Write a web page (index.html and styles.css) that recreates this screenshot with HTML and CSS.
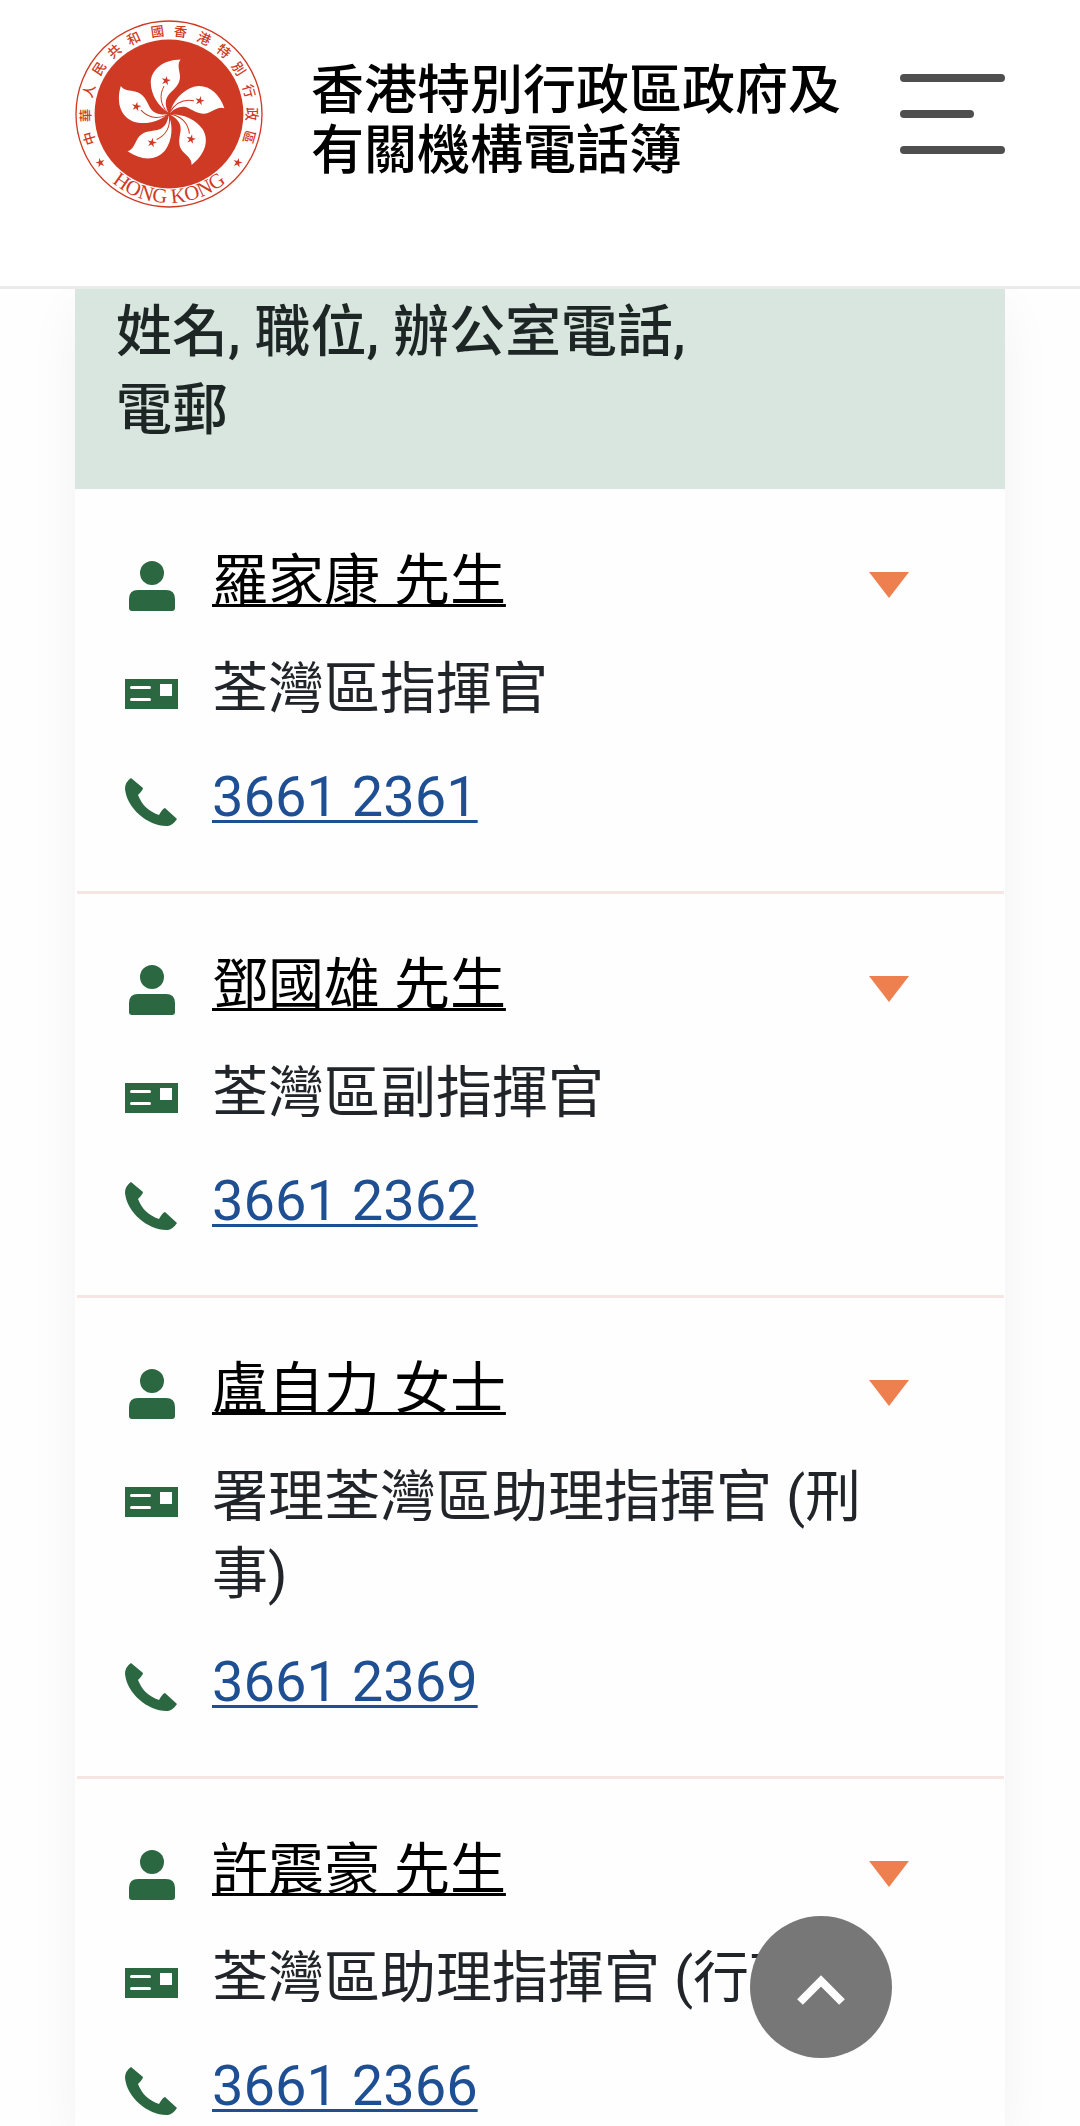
FILE: index.html
```html
<!DOCTYPE html>
<html lang="zh-Hant-HK">
<head>
  <meta charset="UTF-8">
  <title>香港特別行政區政府及有關機構電話簿</title>
  <meta name="viewport" content="width=device-width, initial-scale=1">
  <link rel="stylesheet" href="styles.css">
</head>
<body>
  <!-- shared icons -->
  <svg class="sprite" aria-hidden="true">
    <symbol id="icon-person" viewBox="0 0 54 54">
      <circle cx="27" cy="14" r="12"/>
      <path d="M4 40 Q4 31 13 31 H41 Q50 31 50 40 V49 Q50 52 47 52 H7 Q4 52 4 49 Z"/>
    </symbol>
    <symbol id="icon-card" viewBox="0 0 54 54">
      <path d="M0 12 H53 V42 H0 Z"/>
      <path d="M35 17 H47 V29 H35 Z" fill="#fff"/>
      <path d="M6.500 20.500 H24.500 M6.500 32.500 H24.500" stroke="#fff" stroke-width="3" stroke-linecap="round"/>
    </symbol>
    <symbol id="icon-phone" viewBox="0 0 54 54">
      <path d="M6 3 L18 13 Q18 15 13 20 C17 30 23 36 34 40 Q38 33 40 33 L52 44 Q48 50 43 51 C24 52 2 34 0 14 Q0 7 6 3 Z"/>
    </symbol>
    <symbol id="icon-caret" viewBox="0 0 40 26">
      <path d="M0 0 H40 L20 26 Z"/>
    </symbol>
  </svg>

  <header class="site-header">
    <a href="#" class="logo" aria-label="主頁">
      <svg viewBox="-283 -283 566 566" fill="#cf3a24">
        <defs>
          <path id="arc" d="M-268 0 A268 268 0 0 0 268 0"/>
          <polygon id="star" points="0,-14 3,-4 14,-4 5,2 9,13 0,6 -9,13 -5,2 -14,-4 -3,-4"/>
          <g id="petal">
            <path fill="#fff" d="M-2 -4 C-32 -22 -55 -58 -55 -96 C-52 -138 -14 -163 35 -164 C24 -150 31 -134 33 -116 C35 -90 16 -76 2 -62 C-14 -45 -12 -25 -2 -4 Z"/>
            <path fill="none" stroke="#cf3a24" stroke-width="3" d="M-15 -84 C-30 -56 -26 -28 -4 -4"/>
            <use href="#star" transform="translate(-9 -101) rotate(12)"/>
          </g>
        </defs>
        <circle r="280" fill="#fff" stroke="#cf3a24" stroke-width="4"/>
        <circle r="224"/>
        <use href="#petal"/>
        <use href="#petal" transform="rotate(72)"/>
        <use href="#petal" transform="rotate(144)"/>
        <use href="#petal" transform="rotate(216)"/>
        <use href="#petal" transform="rotate(288)"/>
        <use href="#star" transform="translate(-207 146) rotate(-15)"/>
        <use href="#star" transform="translate(207 146) rotate(15)"/>
        <g class="logo-ring">
          <text y="-236" transform="rotate(-107)">中</text>
          <text y="-236" transform="rotate(-91)">華</text>
          <text y="-236" transform="rotate(-74)">人</text>
          <text y="-236" transform="rotate(-57)">民</text>
          <text y="-236" transform="rotate(-41)">共</text>
          <text y="-236" transform="rotate(-25)">和</text>
          <text y="-236" transform="rotate(-8)">國</text>
          <text y="-236" transform="rotate(8)">香</text>
          <text y="-236" transform="rotate(25)">港</text>
          <text y="-236" transform="rotate(41)">特</text>
          <text y="-236" transform="rotate(57)">別</text>
          <text y="-236" transform="rotate(74)">行</text>
          <text y="-236" transform="rotate(90)">政</text>
          <text y="-236" transform="rotate(106)">區</text>
        </g>
        <text class="logo-name"><textPath href="#arc" startOffset="50%">HONG KONG</textPath></text>
      </svg>
    </a>
    <h1>香港特別行政區政府及有關機構電話簿</h1>
    <button class="menu-btn" aria-label="選單">
      <span></span>
      <span class="short"></span>
      <span></span>
    </button>
  </header>

  <main class="directory">
    <h2>姓名, 職位, 辦公室電話, 電郵</h2>
    <ul class="people">
      <li class="person">
        <div class="row">
          <svg class="icon"><use href="#icon-person"/></svg>
          <a href="#" class="name">羅家康 先生</a>
          <button class="toggle" aria-label="展開"><svg><use href="#icon-caret"/></svg></button>
        </div>
        <div class="row">
          <svg class="icon"><use href="#icon-card"/></svg>
          <span>荃灣區指揮官</span>
        </div>
        <div class="row">
          <svg class="icon"><use href="#icon-phone"/></svg>
          <a href="tel:36612361" class="tel">3661 2361</a>
        </div>
      </li>
      <li class="person">
        <div class="row">
          <svg class="icon"><use href="#icon-person"/></svg>
          <a href="#" class="name">鄧國雄 先生</a>
          <button class="toggle" aria-label="展開"><svg><use href="#icon-caret"/></svg></button>
        </div>
        <div class="row">
          <svg class="icon"><use href="#icon-card"/></svg>
          <span>荃灣區副指揮官</span>
        </div>
        <div class="row">
          <svg class="icon"><use href="#icon-phone"/></svg>
          <a href="tel:36612362" class="tel">3661 2362</a>
        </div>
      </li>
      <li class="person">
        <div class="row">
          <svg class="icon"><use href="#icon-person"/></svg>
          <a href="#" class="name">盧自力 女士</a>
          <button class="toggle" aria-label="展開"><svg><use href="#icon-caret"/></svg></button>
        </div>
        <div class="row">
          <svg class="icon"><use href="#icon-card"/></svg>
          <span>署理荃灣區助理指揮官 (刑事)</span>
        </div>
        <div class="row">
          <svg class="icon"><use href="#icon-phone"/></svg>
          <a href="tel:36612369" class="tel">3661 2369</a>
        </div>
      </li>
      <li class="person">
        <div class="row">
          <svg class="icon"><use href="#icon-person"/></svg>
          <a href="#" class="name">許震豪 先生</a>
          <button class="toggle" aria-label="展開"><svg><use href="#icon-caret"/></svg></button>
        </div>
        <div class="row">
          <svg class="icon"><use href="#icon-card"/></svg>
          <span>荃灣區助理指揮官 (行政)</span>
        </div>
        <div class="row">
          <svg class="icon"><use href="#icon-phone"/></svg>
          <a href="tel:36612366" class="tel">3661 2366</a>
        </div>
      </li>
    </ul>
  </main>

  <button class="back-top" aria-label="返回頁首">
    <svg viewBox="0 0 50 32"><path d="M4 28 L25 7 L46 28" fill="none" stroke="#fff" stroke-width="8"/></svg>
  </button>
</body>
</html>
```

FILE: styles.css
```css
* {
  box-sizing: border-box;
}
body {
  margin: 0;
  min-height: 100vh;
  display: flex;
  flex-direction: column;
  background: #fefefe;
  color: #212529;
  font-family: Roboto, "Noto Sans CJK TC", sans-serif;
  font-size: 56px;
  line-height: 77px;
}
button {
  padding: 0;
  border: none;
  background: none;
  cursor: pointer;
}
.sprite {
  display: none;
}

/* top bar */
.site-header {
  position: sticky;
  top: 0;
  z-index: 2;
  display: flex;
  align-items: flex-start;
  padding: 20px 75px 78px;
  background: #fff;
  border-bottom: 3px solid #e9ebea;
}
.logo {
  flex: none;
  width: 188px;
  height: 188px;
}
.logo svg {
  display: block;
  width: 100%;
  height: 100%;
}
.logo-ring {
  font-family: "Noto Sans CJK TC", sans-serif;
  font-size: 40px;
  font-weight: 500;
  text-anchor: middle;
}
.logo-name {
  font-family: "Liberation Serif", serif;
  font-size: 62px;
  text-anchor: middle;
}
.site-header h1 {
  flex: 1;
  margin: 41px 40px 0 48px;
  color: #000;
  font-size: 53px;
  font-weight: 500;
  line-height: 60px;
}
.menu-btn {
  flex: none;
  display: flex;
  flex-direction: column;
  gap: 28px;
  width: 105px;
  margin-top: 54px;
}
.menu-btn span {
  width: 100%;
  height: 8px;
  border-radius: 4px;
  background: #4f4f4f;
}
.menu-btn .short {
  width: 74px;
}

/* list of contacts */
.directory {
  flex: 1;
  margin: 0 75px;
  background: #fefefe;
  box-shadow: 0 20px 50px rgba(0, 0, 0, 0.05);
}
.directory h2 {
  margin: 0;
  padding: 4px 280px 40px 41px;
  background: #d9e6df;
  color: #1d2624;
  font-size: 56px;
  font-weight: 500;
  line-height: 78px;
}
.people {
  margin: 0;
  padding: 1px 1px 0 2px;
  list-style: none;
}
.person {
  display: flex;
  flex-direction: column;
  gap: 31px;
  padding: 53px 95px 55px 48px;
  border-bottom: 3px solid #f5e6e3;
}
.person:last-child {
  padding-bottom: 0;
  border-bottom: none;
}
.row {
  display: flex;
  align-items: flex-start;
}
.icon {
  flex: none;
  width: 54px;
  height: 54px;
  margin: 16px 33px 0 0;
  fill: #2b6841;
}
.name,
.tel {
  text-decoration: underline;
  text-decoration-thickness: 3px;
  text-decoration-skip-ink: none;
  text-underline-offset: 4px;
}
.name {
  color: #000;
}
.tel {
  color: #1f4f93;
}
.toggle {
  margin: 29px 0 0 auto;
}
.toggle svg {
  display: block;
  width: 40px;
  height: 26px;
  fill: #ee8050;
}

.back-top {
  position: fixed;
  right: 188px;
  bottom: 68px;
  z-index: 3;
  display: flex;
  align-items: center;
  justify-content: center;
  width: 142px;
  height: 142px;
  padding-top: 6px;
  border-radius: 50%;
  background: #777;
}
.back-top svg {
  width: 50px;
  height: 32px;
}
```
